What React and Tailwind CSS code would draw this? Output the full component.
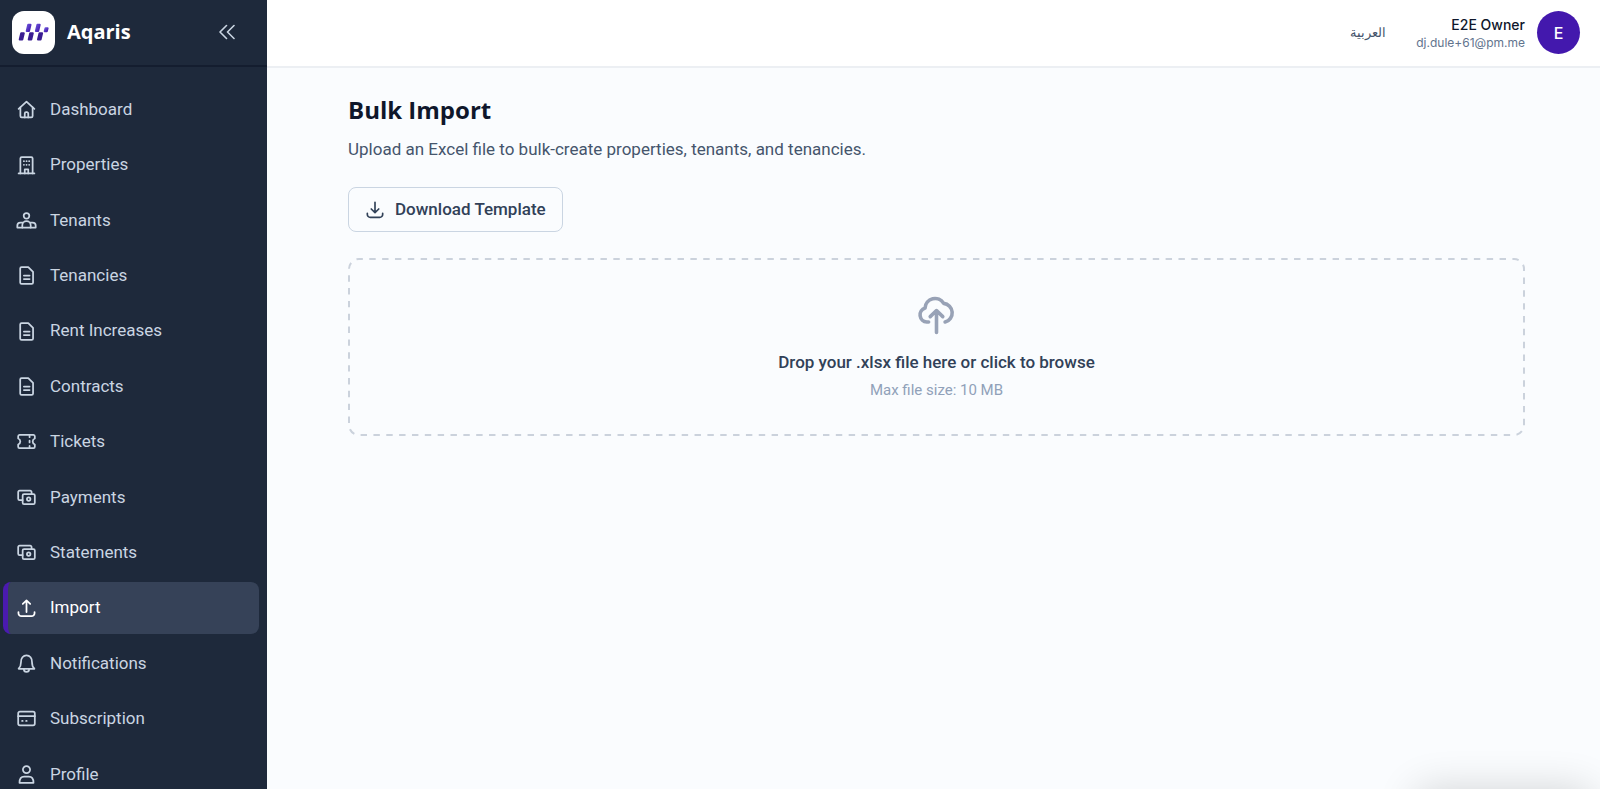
const ICON_PATHS = {
  home: ["M3 11.2 12 3l9 8.2", "M5 9.6v9.9A1.5 1.5 0 0 0 6.5 21h11a1.5 1.5 0 0 0 1.5-1.5V9.6", "M10 21v-4.5a1.5 1.5 0 0 1 1.5-1.5h1a1.5 1.5 0 0 1 1.5 1.5V21"],
  building: ["M3 21h18", "M5 21V4A1.5 1.5 0 0 1 6.5 2.5h11A1.5 1.5 0 0 1 19 4V21", "M10 21v-4.5h4V21", "M9 7h.1M12 7h.1M15 7h.1M9 11.2h.1M12 11.2h.1M15 11.2h.1"],
  people: ["M12 3.5a3.2 3.2 0 1 1 0 6.4a3.2 3.2 0 1 1 0-6.4", "M7.2 20v-2.6a4.8 4.8 0 0 1 9.6 0v2.6", "M7.8 14.4H5A3.5 3.5 0 0 0 1.5 17.9V20h21v-2.1a3.5 3.5 0 0 0-3.5-3.5h-2.8"],
  file: ["M4.8 4A1.6 1.6 0 0 1 6.4 2.4h7.6l5.5 5.5V20a1.6 1.6 0 0 1-1.6 1.6H6.4A1.6 1.6 0 0 1 4.8 20z", "M9 12h6.5M9 16h6.5"],
  ticket: ["M2.5 6A1.6 1.6 0 0 1 4 4.4h16A1.6 1.6 0 0 1 21.5 6v2.6a3.6 3.6 0 0 0 0 6.8V18a1.6 1.6 0 0 1-1.5 1.6H4A1.6 1.6 0 0 1 2.5 18v-2.6a3.6 3.6 0 0 0 0-6.8z", "M15.5 5.5v1.5M15.5 11v2M15.5 17v1.5"],
  cash: ["M9.2 8h10.7A1.6 1.6 0 0 1 21.5 9.6v8.3a1.6 1.6 0 0 1-1.6 1.6H9.2a1.6 1.6 0 0 1-1.6-1.6V9.6A1.6 1.6 0 0 1 9.2 8z", "M7.5 15H4.1A1.6 1.6 0 0 1 2.5 13.4V5.8a1.6 1.6 0 0 1 1.6-1.6h12.1A1.6 1.6 0 0 1 17.8 5.8V8", "M14.5 11.8a2 2 0 1 1 0 4a2 2 0 1 1 0-4"],
  upload: ["M12 16V3M7.8 6.8 12 2.8l4.2 4", "M2.8 16v1.3A3.5 3.5 0 0 0 6.3 20.8h11.4a3.5 3.5 0 0 0 3.5-3.5V16"],
  download: ["M12 2.8V15M7.5 10.8l4.5 4.3 4.5-4.3", "M2.8 16v1.3A3.5 3.5 0 0 0 6.3 20.8h11.4a3.5 3.5 0 0 0 3.5-3.5V16"],
  bell: ["M3 18h18c-1.7-1.6-2.7-3.3-2.7-7.5A6.3 7.3 0 0 0 12 2.6a6.3 7.3 0 0 0-6.3 7.9c0 4.2-1 5.9-2.7 7.5z", "M9 18.7a3 3 0 0 0 6 0"],
  card: ["M4.5 4.2h15a2 2 0 0 1 2 2v11.6a2 2 0 0 1-2 2h-15a2 2 0 0 1-2-2V6.2a2 2 0 0 1 2-2z", "M2.5 9.3h19", "M7 14.8h.6M11.6 14.8h.6"],
  user: ["M12 2.3a4.1 4.1 0 1 1 0 8.2a4.1 4.1 0 1 1 0-8.2", "M4 21.5c0-4.3 2-7 5.3-7h5.4c3.3 0 5.3 2.7 5.3 7z"],
  cloud: ["M7.6 16.2h-1A4 4 0 0 1 5.6 8.4a5.6 5.6 0 0 1 10.4-2.6a5.3 5.3 0 0 1 .8 10.4", "M12 22V9.8M8.5 13.2 12 9.8l3.5 3.4"],
};

const NAV = [
  { label: "Dashboard", icon: "home" },
  { label: "Properties", icon: "building" },
  { label: "Tenants", icon: "people" },
  { label: "Tenancies", icon: "file" },
  { label: "Rent Increases", icon: "file" },
  { label: "Contracts", icon: "file" },
  { label: "Tickets", icon: "ticket" },
  { label: "Payments", icon: "cash" },
  { label: "Statements", icon: "cash" },
  { label: "Import", icon: "upload", active: true },
  { label: "Notifications", icon: "bell" },
  { label: "Subscription", icon: "card" },
  { label: "Profile", icon: "user" },
];

function Icon({ name, className }) {
  return (
    <svg viewBox="0 0 24 24" fill="none" stroke="currentColor" strokeWidth="2" strokeLinecap="round" strokeLinejoin="round" className={className} aria-hidden="true">
      {ICON_PATHS[name].map((d) => (
        <path key={d} d={d} />
      ))}
    </svg>
  );
}

function Logo() {
  return (
    <svg viewBox="0 0 43 43" className="size-[43px] shrink-0" aria-hidden="true">
      <defs>
        <linearGradient id="bar" x1="0" y1="0" x2="1" y2="1">
          <stop offset="0" stopColor="#6a52d8" />
          <stop offset="1" stopColor="#4318ad" />
        </linearGradient>
      </defs>
      <rect width="43" height="43" rx="12" fill="#fff" />
      <g stroke="#3a1d92" strokeWidth="2" strokeLinejoin="round" fill="#3a1d92">
        <path d="M9.2 22.3h2.6l-1.5 6.3H7.7z" />
        <path d="M18.2 22.3h2.6l-1.5 6.3h-2.6z" />
        <path d="M27.5 22.3h2.6l-1.5 6.3h-2.6z" />
      </g>
      <g stroke="url(#bar)" strokeWidth="2" strokeLinejoin="round" fill="url(#bar)">
        <path d="M16.2 13.8h2.3l-1.5 6.2h-2.3z" />
        <path d="M25.4 13.8h2.3l-1.5 6.2h-2.3z" />
        <path d="M33.5 17.2h2.1l-.8 3h-2.1z" />
      </g>
    </svg>
  );
}

function Sidebar() {
  return (
    <aside className="flex w-[267px] shrink-0 flex-col bg-[#1e293b]">
      <div className="flex h-[67px] shrink-0 items-center border-b-2 border-[#141d2f] pr-8 pb-px pl-3">
        <Logo />
        <span className="ml-3 flex-1 font-['Open_Sans',sans-serif] text-xl font-bold text-white">Aqaris</span>
        <button type="button" aria-label="Collapse sidebar" className="text-slate-300">
          <svg viewBox="0 0 16 16" className="size-4" fill="none" stroke="currentColor" strokeWidth="1.6" strokeLinecap="round" strokeLinejoin="round" aria-hidden="true">
            <path d="M7.5 1.5 1 8l6.5 6.5M15 1.5 8.5 8l6.5 6.5" />
          </svg>
        </button>
      </div>
      <nav className="pt-[17px] pr-2 pl-[3px]">
        <ul className="grid min-h-[716px] gap-1">
          {NAV.map(({ label, icon, active }) => (
            <li key={label} className="flex">
              <a
                href="#"
                aria-current={active ? "page" : undefined}
                className={`flex min-h-[51px] flex-1 items-center gap-[13px] rounded-lg border-l-[5px] pl-2 text-[17px] ${
                  active ? "border-[#4a1ab0] bg-[#364258] text-white" : "border-transparent text-slate-300"
                }`}
              >
                <Icon name={icon} className="size-[21px] shrink-0" />
                {label}
              </a>
            </li>
          ))}
        </ul>
      </nav>
    </aside>
  );
}

function Header() {
  return (
    <header className="flex h-[68px] shrink-0 items-center justify-end border-b-2 border-[#eceff3] bg-white pr-5 pb-px font-[Inter,sans-serif]">
      <button type="button" lang="ar" className="text-[13px] text-slate-600">العربية</button>
      <div className="ml-[30px] text-right">
        <p className="text-sm font-medium text-slate-900">E2E Owner</p>
        <p className="text-xs text-slate-500">dj.dule+61@pm.me</p>
      </div>
      <div className="ml-3 flex size-[43px] items-center justify-center rounded-full bg-[#4318ad] text-base font-medium text-white">E</div>
    </header>
  );
}

function DropZone() {
  return (
    <label htmlFor="import-file" className="relative mt-[26px] flex flex-col items-center rounded-[10px] px-6 pt-[35px] pb-9 text-center">
      <svg className="absolute inset-0 size-full text-[#cbd2dc]" fill="none" stroke="currentColor" aria-hidden="true">
        <rect x="1" y="1" rx="10" pathLength="418" strokeWidth="2" strokeDasharray="1 1" strokeDashoffset="0.4" className="h-[calc(100%-2px)] w-[calc(100%-2px)]" />
      </svg>
      <Icon name="cloud" className="size-[43px] text-[#98a2b6]" />
      <span className="mt-[14px] text-[17px] leading-6 font-medium text-slate-700">Drop your .xlsx file here or click to browse</span>
      <span className="mt-[6px] text-[15px] leading-5 text-slate-400">Max file size: 10 MB</span>
      <input id="import-file" type="file" accept=".xlsx" className="sr-only" />
    </label>
  );
}

export default function App() {
  return (
    <div className="relative flex h-screen overflow-hidden bg-[#fafcfe] font-[Roboto,sans-serif]">
      <Sidebar />
      <div className="flex min-w-0 flex-1 flex-col">
        <Header />
        <main className="flex-1 pt-6 pr-[75px] pl-[81px]">
          <h1 className="font-['Open_Sans',sans-serif] text-2xl leading-9 font-bold text-slate-900">Bulk Import</h1>
          <p className="mt-[9px] text-[17px] leading-6 text-slate-600">Upload an Excel file to bulk-create properties, tenants, and tenancies.</p>
          <button type="button" className="mt-[26px] flex h-[45px] items-center gap-[10px] rounded-lg border border-slate-300 px-4 text-[17px] font-medium text-slate-700">
            <Icon name="download" className="size-5" />
            Download Template
          </button>
          <DropZone />
        </main>
      </div>
      <div className="absolute top-full right-2 h-20 w-44 rounded-xl shadow-[0_0_40px_rgba(0,0,0,0.16)]" />
    </div>
  );
}
